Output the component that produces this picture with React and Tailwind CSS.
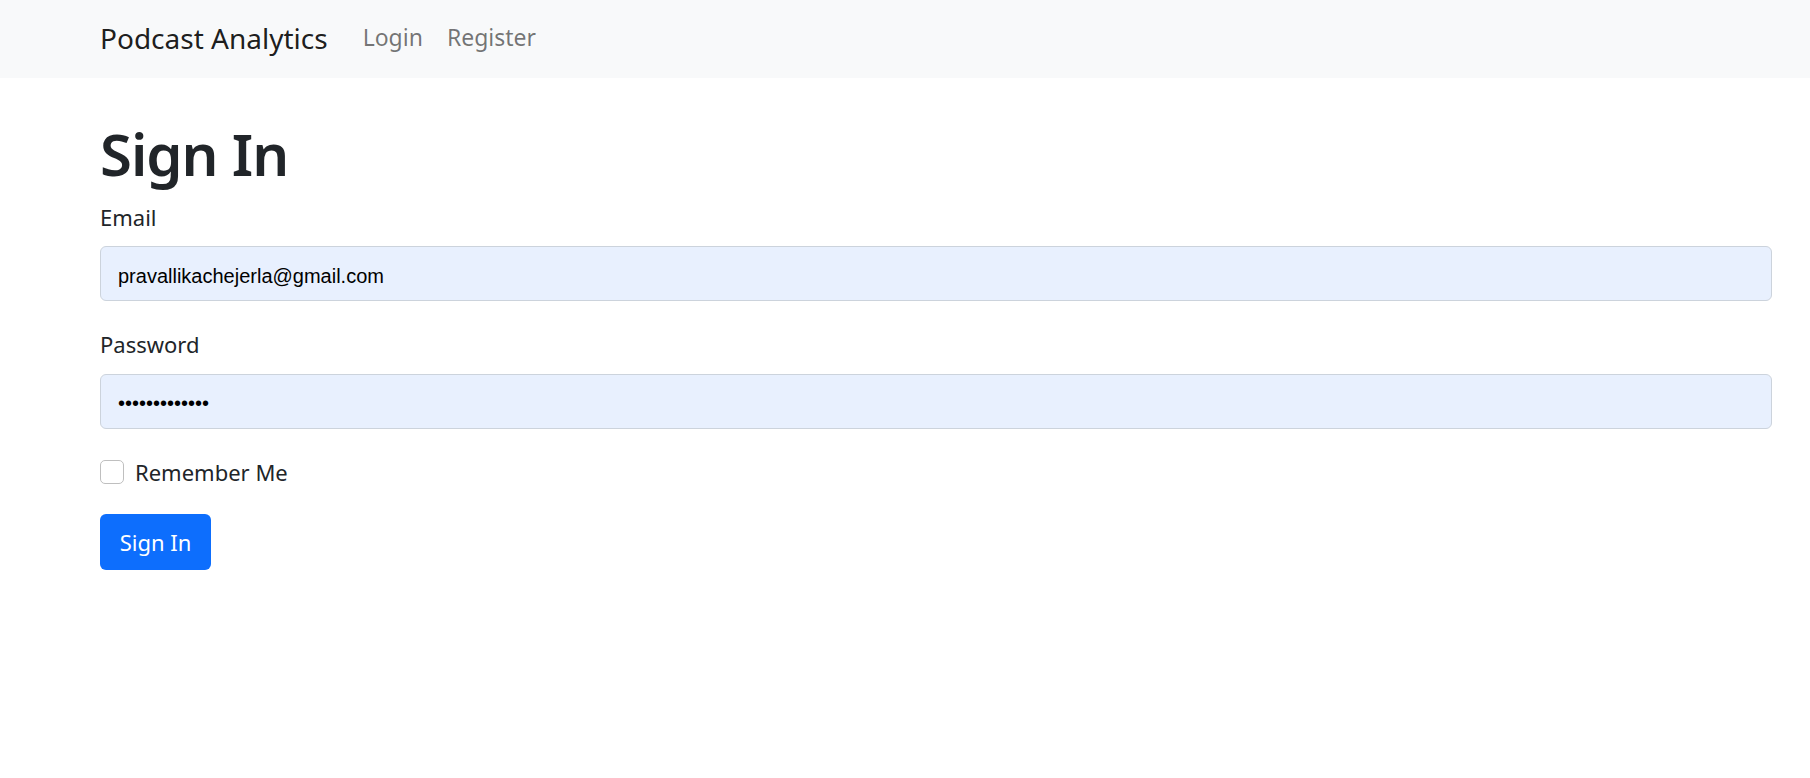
import React, { useState } from "react";

const SignInPage = () => {
    const [formData, setFormData] = useState({
        email: "pravallikachejerla@gmail.com",
        password: "•••••••••••••",
    });
    const [remember, setRemember] = useState(false);

    const handleChange = (event) => {
        const { name, value } = event.target;
        setFormData({ ...formData, [name]: value });
    };

    return (
        <div className="min-h-screen bg-white text-[#212529] font-['Noto_Sans',sans-serif]">
            <nav className="h-[78px] bg-[#f8f9fa] flex items-start pt-[24px] pl-[100px]">
                <a href="#" className="text-[28px] leading-none text-black/90">
                    Podcast Analytics
                </a>
                <a href="#" className="ml-[35px] mt-[2px] text-[23px] leading-none text-black/55">
                    Login
                </a>
                <a href="#" className="ml-[24px] mt-[2px] text-[23px] leading-none text-black/55">
                    Register
                </a>
            </nav>
            <main className="pl-[100px] pr-[38px] pt-[47px]">
                <h1 className="text-[58px] leading-none font-semibold tracking-[-1px]">Sign In</h1>
                <form onSubmit={(e) => e.preventDefault()}>
                    <label className="block mt-[23px] text-[22px] leading-none">Email</label>
                    <input
                        type="text"
                        name="email"
                        value={formData.email}
                        onChange={handleChange}
                        className="mt-[18px] block w-full h-[55px] px-[17px] pt-[5px] rounded-[6px] border border-[#ccd3dc] bg-[#e8f0fe] text-black text-[20px] font-['Liberation_Sans',Arial,sans-serif] outline-none"
                    />
                    <label className="block mt-[32px] text-[22px] leading-none">Password</label>
                    <input
                        type="text"
                        name="password"
                        value={formData.password}
                        onChange={handleChange}
                        className="mt-[19px] block w-full h-[55px] px-[17px] pt-[3px] rounded-[6px] border border-[#ccd3dc] bg-[#e8f0fe] text-black text-[20px] font-['Liberation_Sans',Arial,sans-serif] outline-none"
                    />
                    <div className="mt-[31px] flex items-center">
                        <button
                            type="button"
                            onClick={() => setRemember(!remember)}
                            className="w-[24px] h-[24px] rounded-[5px] border border-[#bfbfbf] bg-white"
                        />
                        <span className="ml-[11px] text-[22px] leading-none">Remember Me</span>
                    </div>
                    <button
                        type="submit"
                        className="mt-[30px] w-[111px] h-[56px] rounded-[6px] bg-[#0d6efd] text-white text-[22px] leading-none"
                    >
                        Sign In
                    </button>
                </form>
            </main>
        </div>
    );
};

export default SignInPage;
